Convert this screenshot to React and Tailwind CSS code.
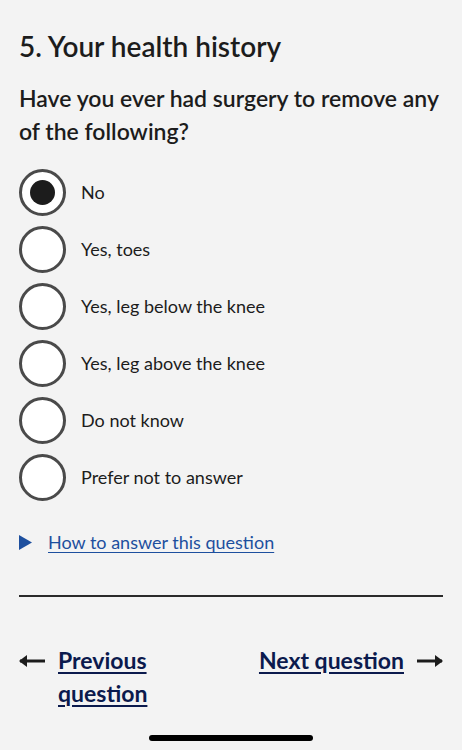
const OPTIONS = [
  "No",
  "Yes, toes",
  "Yes, leg below the knee",
  "Yes, leg above the knee",
  "Do not know",
  "Prefer not to answer",
];

const Radio = ({ checked, label }) => (
  <label className="flex items-center h-[57px] gap-[15px]">
    <span className="w-[47px] h-[47px] rounded-full border-[3px] border-[#4a4a4a] bg-white flex items-center justify-center shrink-0">
      {checked && <span className="w-[25px] h-[25px] rounded-full bg-[#1c1c1c]" />}
    </span>
    <span className="text-[18px] text-[#1c1c1c]">{label}</span>
  </label>
);

const ArrowLeft = () => (
  <svg width="27" height="14" viewBox="0 0 27 14" className="shrink-0">
    <path d="M1 7h25" stroke="#1c1c1c" strokeWidth="3" />
    <path d="M0 7l8-6v12z" fill="#1c1c1c" />
  </svg>
);

const ArrowRight = () => (
  <svg width="27" height="14" viewBox="0 0 27 14" className="shrink-0">
    <path d="M1 7h25" stroke="#1c1c1c" strokeWidth="3" />
    <path d="M27 7l-8-6v12z" fill="#1c1c1c" />
  </svg>
);

export default function App() {
  const selected = "No";
  return (
    <div className="min-h-[750px] bg-[#f3f3f3] px-[19px] pt-[26px] flex flex-col font-['Source_Sans_Pro','Lato','Noto_Sans',sans-serif] text-[#1c1c1c]">
      <h1 className="text-[28px] leading-[40px] font-semibold">5. Your health history</h1>

      <h2 className="mt-[16px] text-[23px] leading-[33px] font-semibold">
        Have you ever had surgery to remove any of the following?
      </h2>

      <div className="mt-[16px] flex flex-col">
        {OPTIONS.map(o => (
          <Radio key={o} label={o} checked={o === selected} />
        ))}
      </div>

      {/* details */}
      <div className="mt-[24px] flex items-center gap-[16px]">
        <svg width="13" height="15" viewBox="0 0 13 15"><path d="M0 0l13 7.5L0 15z" fill="#1d4f9e" /></svg>
        <a href="#" className="text-[18px] leading-[24px] text-[#1d4f9e] underline underline-offset-[3px]">How to answer this question</a>
      </div>

      <div className="mt-[41px] h-[2px] bg-[#2a2a2a]" />

      {/* pagination */}
      <div className="mt-[47px] flex justify-between items-start">
        <a href="#" className="flex items-start gap-[12px]">
          <span className="h-[33px] flex items-center"><ArrowLeft /></span>
          <span className="text-[23px] leading-[33px] font-bold text-[#0b1a4d] underline underline-offset-[3px] w-[100px]">Previous question</span>
        </a>
        <a href="#" className="flex items-start gap-[12px]">
          <span className="text-[23px] leading-[33px] font-bold text-[#0b1a4d] underline underline-offset-[3px]">Next question</span>
          <span className="h-[33px] flex items-center"><ArrowRight /></span>
        </a>
      </div>

      <div className="mt-auto pb-[9px] flex justify-center">
        <div className="w-[164px] h-[6px] rounded-full bg-black" />
      </div>
    </div>
  );
}
